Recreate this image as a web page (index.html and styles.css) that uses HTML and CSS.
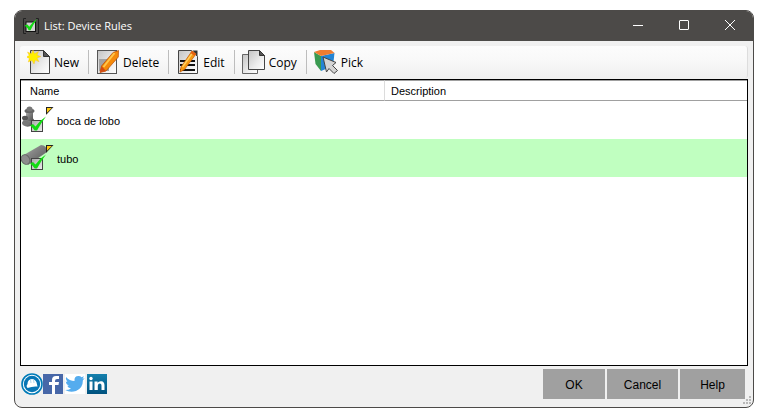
FILE: index.html
```
<!DOCTYPE html>
<html lang="en">
<head>
    <meta charset="UTF-8">
    <meta name="viewport" content="width=device-width, initial-scale=1.0">
    <title>List: Device Rules</title>
    <link rel="stylesheet" href="styles.css">
</head>
<body>
    <!-- shared gradients and the check box glyph -->
    <svg class="defs" width="0" height="0" aria-hidden="true">
        <defs>
            <linearGradient id="paper" x1="0" y1="0" x2="1" y2="1">
                <stop offset="0" stop-color="#c4c4c4"/>
                <stop offset="0.6" stop-color="#ececec"/>
                <stop offset="1" stop-color="#fff"/>
            </linearGradient>
            <linearGradient id="sheet" x1="0" y1="0" x2="1" y2="1">
                <stop offset="0" stop-color="#a8a8a8"/>
                <stop offset="1" stop-color="#eee"/>
            </linearGradient>
            <linearGradient id="metal" x1="0" y1="0" x2="1" y2="1">
                <stop offset="0" stop-color="#b5b5b5"/>
                <stop offset="0.4" stop-color="#858585"/>
                <stop offset="1" stop-color="#505050"/>
            </linearGradient>
            <linearGradient id="linked" x1="0" y1="0" x2="0" y2="1">
                <stop offset="0" stop-color="#1580ad"/>
                <stop offset="1" stop-color="#00527f"/>
            </linearGradient>
            <symbol id="check" viewBox="0 0 18 18">
                <rect x="2.5" y="5.5" width="11" height="11" fill="url(#sheet)" stroke="#444"/>
                <path d="M1 10.500l3-1.500 2.500 2.500Q10.500 5.500 17 1.500 12 8 8 15.500H5.700Q4 12.800 1 10.500z" fill="#12dc12"/>
            </symbol>
            <symbol id="flag" viewBox="0 0 8 8">
                <path d="M0 0h7.500L0.500 7.500H0z" fill="#222"/>
                <path d="M1 1h4.800L1 5.800z" fill="#fc1"/>
            </symbol>
        </defs>
    </svg>

    <div class="window">
        <header class="titlebar">
            <svg class="app-icon" viewBox="0 0 16 16" width="16" height="16">
                <path d="M3 .5H.5v15H3M13 .5h2.500v15H13" fill="none" stroke="#222"/>
                <rect x="3" y="4" width="9.500" height="9.500" fill="#d0d0d0" stroke="#111"/>
                <path d="M1.500 7.500l3-1 1.800 2.300Q9 4 14 1 10 7 7.500 12.200H5.700Q4.500 9.500 1.500 7.500z" fill="#12dc12"/>
            </svg>
            <h1>List: Device Rules</h1>
            <button class="caption-btn" aria-label="Minimize">
                <svg viewBox="0 0 12 12" width="12" height="12"><path d="M1 5.500h10"/></svg>
            </button>
            <button class="caption-btn" aria-label="Maximize">
                <svg viewBox="0 0 12 12" width="12" height="12"><rect x="1.500" y="0.500" width="9" height="9" rx="0.5"/></svg>
            </button>
            <button class="caption-btn" aria-label="Close">
                <svg viewBox="0 0 12 12" width="12" height="12"><path d="M1 0l10 10M11 0L1 10"/></svg>
            </button>
        </header>

        <div class="toolbar" role="toolbar">
            <button class="tool">
                <svg viewBox="0 0 24 24" width="24" height="24">
                    <path d="M3.500.500h13l6 6v17h-19z" fill="url(#paper)" stroke="#444"/>
                    <path d="M16.500.500v6h6z" fill="#555" stroke="#333"/>
                    <path d="M6 0l1.500 3.800L11.500 1.500 10 5.300l4 1.200-4 1.500 2 3.700-3.700-1.600L7 14l-2-3.700L1.300 12l1-3.700L-1 7l3.200-1.500L.5 2l4 1.700z" fill="#fff000" stroke="#fcb820" stroke-width="0.4"/>
                </svg>
                New
            </button>
            <button class="tool">
                <svg viewBox="0 0 24 24" width="24" height="24">
                    <rect x="1.500" y=".5" width="19" height="23" fill="url(#paper)" stroke="#555"/>
                    <path d="M3 9h10v12H3z" fill="#a3a3a3"/>
                    <path d="M17 2.500L22.500.500 22.300 7 10 21l-6 1.500 1.500-6.500z" fill="#f58a0a" stroke="#b84a00" stroke-width="0.7"/>
                    <path d="M18.500 3L7.500 17" stroke="#ffc64a" stroke-width="2"/>
                    <path d="M5.500 16l4.500 5-6 1.500z" fill="#d24a12"/>
                </svg>
                Delete
            </button>
            <button class="tool">
                <svg viewBox="0 0 24 24" width="24" height="24">
                    <path d="M2.500.500h13l6 6v17h-19z" fill="url(#paper)" stroke="#444"/>
                    <path d="M16.500.500h5v6z" fill="#333"/>
                    <path d="M4 11h15M4 15h15M4 20h15" stroke="#111" stroke-width="2"/>
                    <path d="M16 1l4 3L8.500 19.500 4 22l1-5z" fill="#f79a12" stroke="#c25400" stroke-width="0.7"/>
                    <path d="M16.500 3L6.500 17" stroke="#ffd060" stroke-width="1.400"/>
                    <path d="M16 1l4 3-1.500 2-4-3z" fill="#e86010"/>
                </svg>
                Edit
            </button>
            <button class="tool">
                <svg viewBox="0 0 24 24" width="24" height="24">
                    <path d="M.5 4.500h15v19H.5z" fill="url(#paper)" stroke="#666"/>
                    <path d="M6.500.500h11l5 5v14h-16z" fill="url(#paper)" stroke="#444"/>
                    <path d="M17.500.500v5h5z" fill="#555" stroke="#333"/>
                </svg>
                Copy
            </button>
            <button class="tool">
                <svg viewBox="0 0 24 24" width="24" height="24">
                    <path d="M0 2l7 4v15L1.500 14z" fill="#3a9a50"/>
                    <path d="M7 6l13.500-3L19 16 7 21z" fill="#2484d4"/>
                    <path d="M0 2l6-2h11l3.500 3L7 6z" fill="#f07c30"/>
                    <path d="M9 7l13 5.500-3.500 3 5 5-3.500 3-5-5-2.500 3.500z" fill="#d4d4d4" stroke="#444"/>
                </svg>
                Pick
            </button>
        </div>

        <main class="list">
            <table>
                <thead>
                    <tr>
                        <th scope="col">Name</th>
                        <th scope="col">Description</th>
                    </tr>
                </thead>
                <tbody>
                    <tr>
                        <td>
                            <div class="device">
                                <svg viewBox="0 0 33 32" width="33" height="32">
                                    <path d="M2 14q5-3 11 0v5q-6 5-11 1z" fill="url(#metal)"/>
                                    <path d="M5 6h7v9q-4 2-7 0z" fill="url(#metal)"/>
                                    <ellipse cx="8.500" cy="6" rx="5" ry="2.200" fill="#666"/>
                                    <ellipse cx="8.500" cy="4" rx="3" ry="2.500" fill="#777"/>
                                    <ellipse cx="4" cy="13" rx="3" ry="2.300" fill="#555"/>
                                    <ellipse cx="4.500" cy="18" rx="3.500" ry="2.500" fill="#777"/>
                                    <use href="#check" x="8" y="10" width="18" height="18"/>
                                    <use href="#flag" x="25" y="2" width="8" height="8"/>
                                </svg>
                                boca de lobo
                            </div>
                        </td>
                        <td></td>
                    </tr>
                    <tr class="selected">
                        <td>
                            <div class="device">
                                <svg viewBox="0 0 33 32" width="33" height="32">
                                    <path d="M1 13L20 2q6 0 6 7L7 22z" fill="url(#metal)"/>
                                    <ellipse cx="4.500" cy="16.500" rx="4" ry="5" transform="rotate(-30 4.500 16.500)" fill="#8c8c8c" stroke="#666"/>
                                    <use href="#check" x="8" y="10" width="18" height="18"/>
                                    <use href="#flag" x="25" y="2" width="8" height="8"/>
                                </svg>
                                tubo
                            </div>
                        </td>
                        <td></td>
                    </tr>
                </tbody>
            </table>
        </main>

        <footer class="bottom">
            <nav class="social">
                <a href="#" aria-label="Website">
                    <svg viewBox="0 0 22 22" width="22" height="22">
                        <circle cx="11" cy="11" r="10" fill="#fff" stroke="#007bb8" stroke-width="1.600"/>
                        <circle cx="11" cy="11" r="8.200" fill="#0876b5"/>
                        <path d="M6.500 11q0-4.500 4.500-5 4.500.500 5 5.500l.5 2q-5-.5-10 1.500l-1-2z" fill="#fff"/>
                        <path d="M9.500 6.500l.5 3.500M12.500 6.500l.5 3.500" stroke="#b4d8ec"/>
                    </svg>
                </a>
                <a href="#" aria-label="Facebook">
                    <svg viewBox="1 0 22 22" width="22" height="22">
                        <rect x="1" y="1" width="20" height="20" fill="#4767a8"/>
                        <path d="M10 21v-9H7V9h3V7q0-4 4-4h3v3h-2q-2 0-2 2v1h4l-.5 3H13v9z" fill="#fff"/>
                    </svg>
                </a>
                <a href="#" aria-label="Twitter">
                    <svg viewBox="1 0 22 22" width="22" height="22">
                        <rect x="1" y="1" width="20" height="20" fill="#fff"/>
                        <path d="M2 4q3.500 4 8.500 4Q10 3 14.500 3q2 0 3 1.300l2.500-1-1.500 2.500 2.200-.6L18.900 7.200Q19 15 12 18q-6 2-10.800-1Q5 17 7 15.500 4 15 3.200 12.700h1.700Q2 11.500 1.700 8.400l1.700.5Q1 6.500 2 4z" fill="#55acee"/>
                    </svg>
                </a>
                <a href="#" aria-label="LinkedIn">
                    <svg viewBox="1 0 22 22" width="22" height="22">
                        <rect x="1" y="1" width="20" height="20" fill="url(#linked)"/>
                        <circle cx="5" cy="5.500" r="1.700" fill="#fff"/>
                        <path d="M3.500 8.500h3V17h-3zM8.500 8.500h3v1.300Q13 8 15.300 8.300 18.500 8.500 18.500 12.500V17h-3v-4.500q0-2-1.700-2t-2 2V17H8.500z" fill="#fff"/>
                    </svg>
                </a>
            </nav>
            <div class="actions">
                <button class="btn">OK</button>
                <button class="btn">Cancel</button>
                <button class="btn">Help</button>
            </div>
        </footer>

        <svg class="grip" viewBox="0 0 9 9" width="9" height="9" aria-hidden="true">
            <path d="M6 0h2v2H6zM3 3h2v2H3zM6 3h2v2H6zM0 6h2v2H0zM3 6h2v2H3zM6 6h2v2H6z" fill="#b8b8b8"/>
        </svg>
    </div>
</body>
</html>
```

FILE: styles.css
```
* {
    box-sizing: border-box;
}

body {
    margin: 0;
    padding: 10px 10px 8px 14px;
    height: 100vh;
    background-color: #fff;
    color: #000;
    font-family: "Liberation Sans", Arial, sans-serif;
    font-size: 11px;
}

button {
    margin: 0;
    border: none;
    color: inherit;
    cursor: pointer;
}

svg {
    display: block;
    flex: none;
}

.defs {
    position: absolute;
}

.window {
    position: relative;
    display: flex;
    flex-direction: column;
    height: 100%;
    border: 1px solid #4c4a48;
    border-radius: 8px;
    overflow: hidden;
    background-color: #f0f0f0;
}

/* Title bar */
.titlebar {
    display: flex;
    align-items: center;
    height: 30px;
    flex: none;
    padding-left: 8px;
    background-color: #4c4a48;
    color: #fff;
}

.titlebar h1 {
    flex: 1;
    margin: 0 0 0 5px;
    font-family: "Open Sans", "Segoe UI", sans-serif;
    font-size: 11px;
    line-height: 16px;
    font-weight: normal;
}

.caption-btn {
    display: flex;
    align-items: center;
    justify-content: center;
    width: 46px;
    height: 30px;
    padding: 0;
    background: none;
}

.caption-btn svg {
    fill: none;
    stroke: #fff;
}

/* Toolbar */
.toolbar {
    display: flex;
    align-items: center;
    height: 32px;
    flex: none;
    margin: 5px 5px 0;
    border-right: 1px solid #ddd;
    border-radius: 3px;
    background: linear-gradient(#fcfcfc, #f8f8f8 50%, #f0f0f0);
}

.tool {
    display: flex;
    align-items: center;
    gap: 3px;
    height: 24px;
    padding: 0 9px 0 7px;
    background: none;
    font-family: "Open Sans", "Segoe UI", sans-serif;
    font-size: 12px;
}

.tool + .tool {
    border-left: 1px solid #bdbdbd;
}

/* List */
.list {
    flex: 1;
    margin: 1px 5px 0;
    border: 1px solid #000;
    background-color: #fff;
    overflow: auto;
}

table {
    width: 100%;
    border-collapse: separate;
    border-spacing: 0;
    table-layout: fixed;
}

th {
    height: 21px;
    padding: 0 9px;
    border-top: 1px solid #a0a0a0;
    border-bottom: 1px solid #a0a0a0;
    text-align: left;
    font-weight: normal;
}

th + th {
    padding-left: 6px;
    border-left: 1px solid #dcdcdc;
}

td {
    height: 38px;
    padding: 2px 0 0;
}

.device {
    display: flex;
    align-items: center;
    gap: 3px;
}

.selected {
    background-color: #c0ffc0;
}

/* Footer */
.bottom {
    display: flex;
    align-items: center;
    justify-content: space-between;
    height: 41px;
    flex: none;
    padding: 0 8px 5px 6px;
}

.social {
    display: flex;
}

.actions {
    display: grid;
    grid-template-columns: 62px 71px 65px;
    gap: 2px;
}

.btn {
    height: 30px;
    padding: 2px 0 0;
    background-color: #a0a0a0;
    font-family: inherit;
    font-size: 12px;
}

.grip {
    position: absolute;
    right: 1px;
    bottom: 2px;
}
```
